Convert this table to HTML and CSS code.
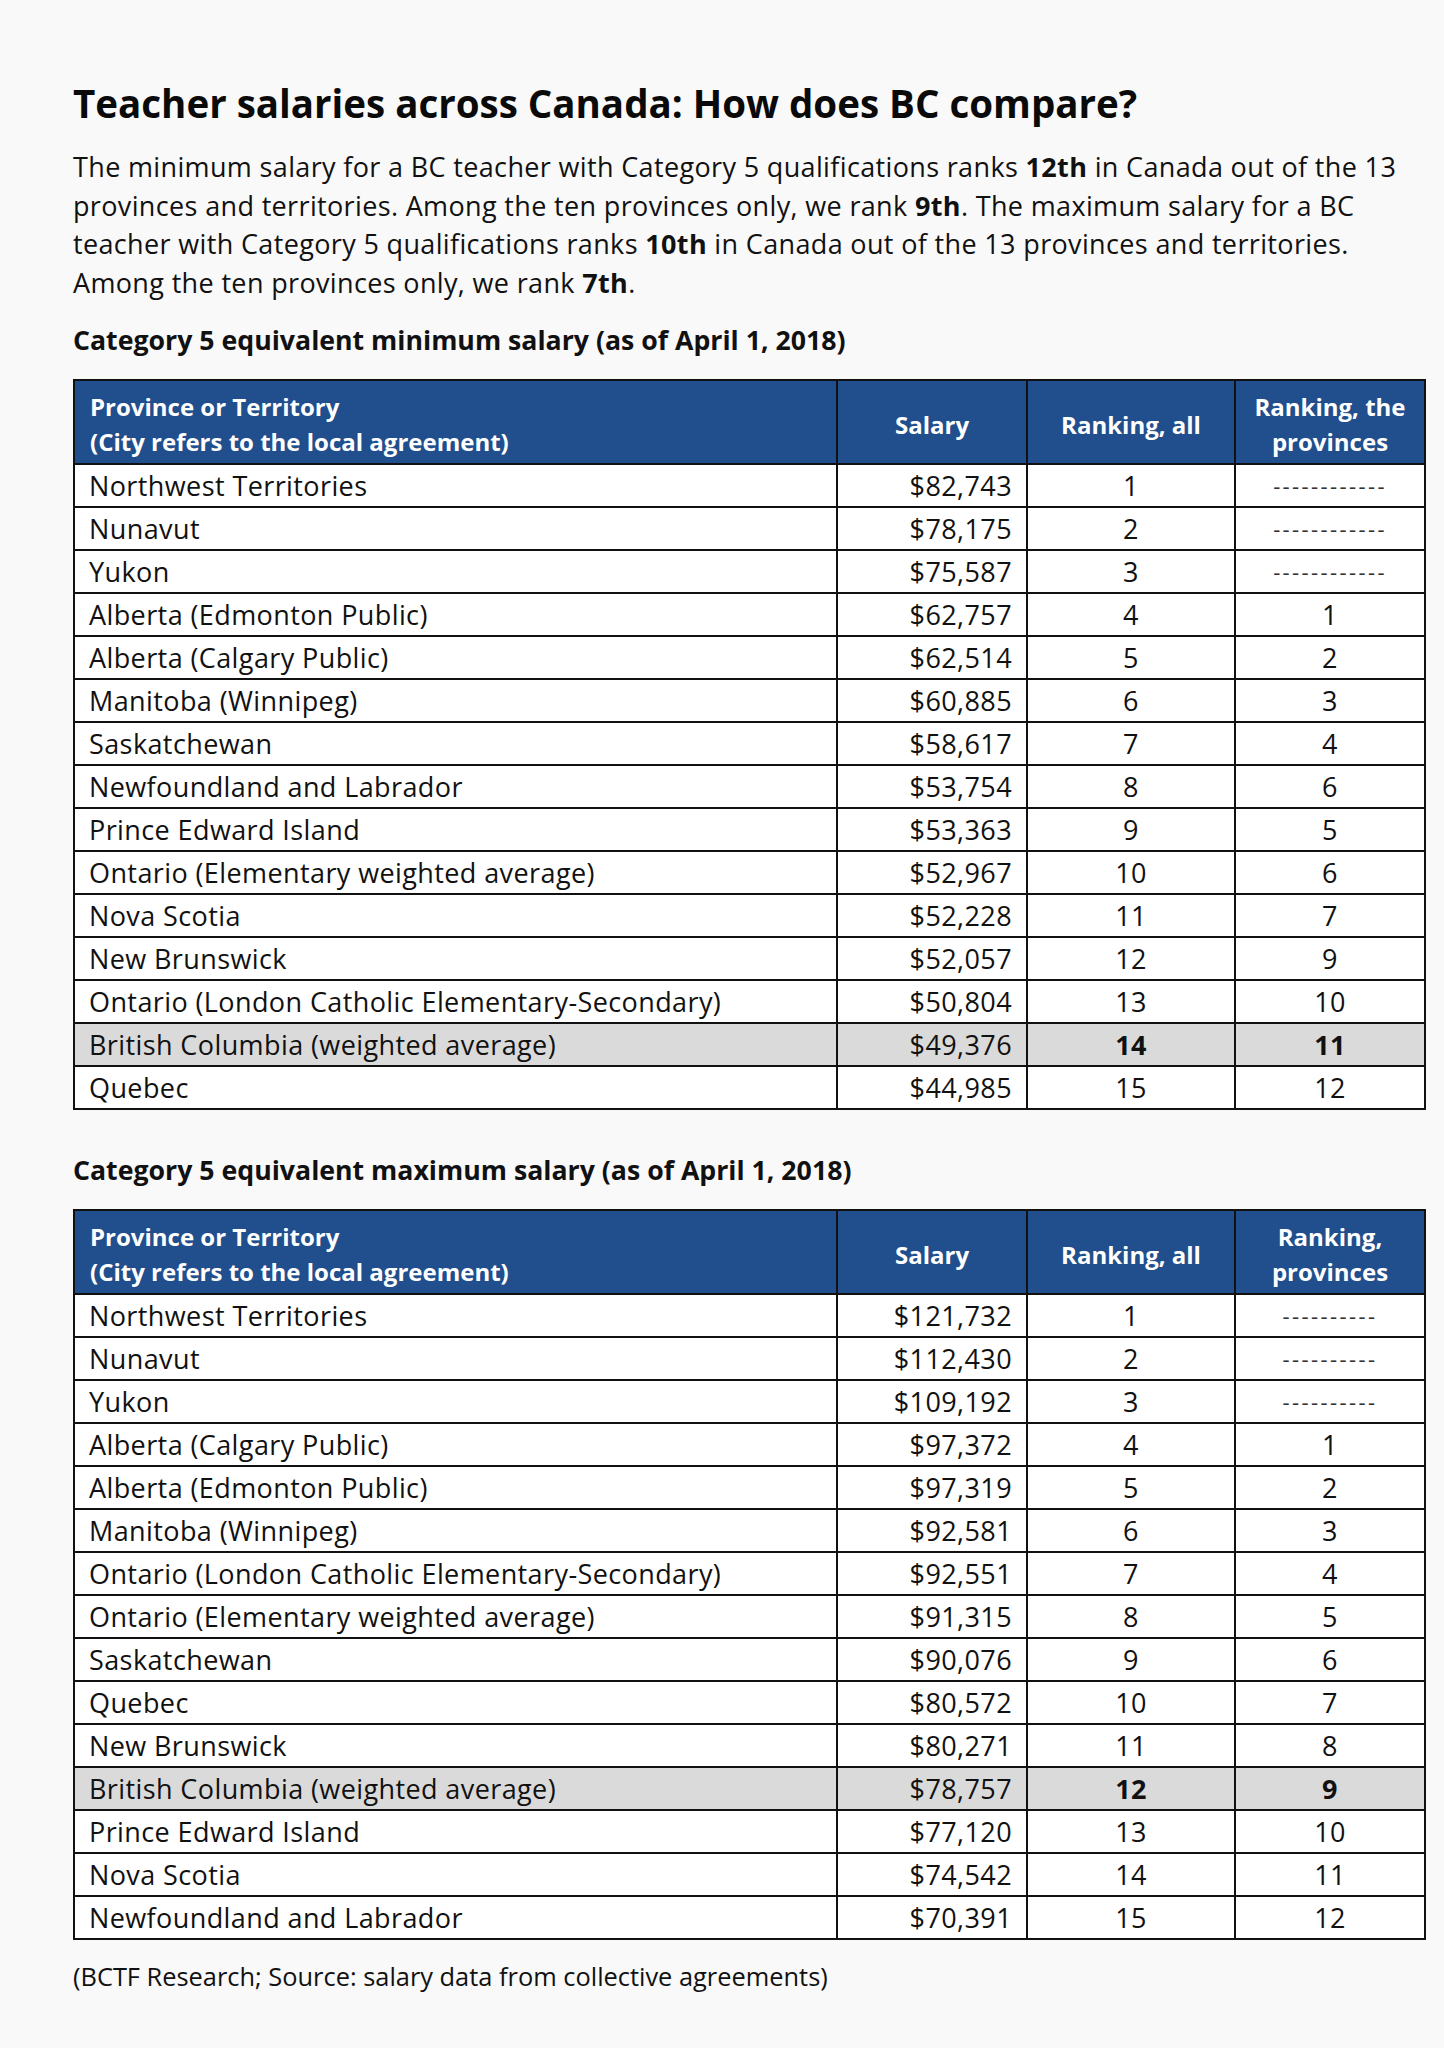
FILE: index.html
```html
<!DOCTYPE html>
<html lang="en">
<head>
<meta charset="utf-8">
<title>Teacher salaries across Canada: How does BC compare?</title>
<link rel="stylesheet" href="styles.css">
</head>
<body>
<main class="page">
  <h1 class="title">Teacher salaries across Canada: How does BC compare?</h1>
  <p class="intro">The minimum salary for a BC teacher with Category 5 qualifications ranks <b>12th</b> in Canada out of the 13<br>provinces and territories. Among the ten provinces only, we rank <b>9th</b>. The maximum salary for a BC<br>teacher with Category 5 qualifications ranks <b>10th</b> in Canada out of the 13 provinces and territories.<br>Among the ten provinces only, we rank <b>7th</b>.</p>

  <h2 class="caption">Category 5 equivalent minimum salary (as of April 1, 2018)</h2>
  <table class="salaries">
    <colgroup><col class="c-name"><col class="c-sal"><col class="c-all"><col class="c-prov"></colgroup>
    <thead>
      <tr><th class="th-name">Province or Territory<br>(City refers to the local agreement)</th><th>Salary</th><th>Ranking, all</th><th>Ranking, the<br>provinces</th></tr>
    </thead>
    <tbody>
      <tr><td class="name">Northwest Territories</td><td class="sal">$82,743</td><td class="rk">1</td><td class="rk dash">------------</td></tr>
      <tr><td class="name">Nunavut</td><td class="sal">$78,175</td><td class="rk">2</td><td class="rk dash">------------</td></tr>
      <tr><td class="name">Yukon</td><td class="sal">$75,587</td><td class="rk">3</td><td class="rk dash">------------</td></tr>
      <tr><td class="name">Alberta (Edmonton Public)</td><td class="sal">$62,757</td><td class="rk">4</td><td class="rk">1</td></tr>
      <tr><td class="name">Alberta (Calgary Public)</td><td class="sal">$62,514</td><td class="rk">5</td><td class="rk">2</td></tr>
      <tr><td class="name">Manitoba (Winnipeg)</td><td class="sal">$60,885</td><td class="rk">6</td><td class="rk">3</td></tr>
      <tr><td class="name">Saskatchewan</td><td class="sal">$58,617</td><td class="rk">7</td><td class="rk">4</td></tr>
      <tr><td class="name">Newfoundland and Labrador</td><td class="sal">$53,754</td><td class="rk">8</td><td class="rk">6</td></tr>
      <tr><td class="name">Prince Edward Island</td><td class="sal">$53,363</td><td class="rk">9</td><td class="rk">5</td></tr>
      <tr><td class="name">Ontario (Elementary weighted average)</td><td class="sal">$52,967</td><td class="rk">10</td><td class="rk">6</td></tr>
      <tr><td class="name">Nova Scotia</td><td class="sal">$52,228</td><td class="rk">11</td><td class="rk">7</td></tr>
      <tr><td class="name">New Brunswick</td><td class="sal">$52,057</td><td class="rk">12</td><td class="rk">9</td></tr>
      <tr><td class="name">Ontario (London Catholic Elementary-Secondary)</td><td class="sal">$50,804</td><td class="rk">13</td><td class="rk">10</td></tr>
      <tr class="bc"><td class="name">British Columbia (weighted average)</td><td class="sal">$49,376</td><td class="rk"><b>14</b></td><td class="rk"><b>11</b></td></tr>
      <tr><td class="name">Quebec</td><td class="sal">$44,985</td><td class="rk">15</td><td class="rk">12</td></tr>
    </tbody>
  </table>

  <h2 class="caption caption-second">Category 5 equivalent maximum salary (as of April 1, 2018)</h2>
  <table class="salaries">
    <colgroup><col class="c-name"><col class="c-sal"><col class="c-all"><col class="c-prov"></colgroup>
    <thead>
      <tr><th class="th-name">Province or Territory<br>(City refers to the local agreement)</th><th>Salary</th><th>Ranking, all</th><th>Ranking,<br>provinces</th></tr>
    </thead>
    <tbody>
      <tr><td class="name">Northwest Territories</td><td class="sal">$121,732</td><td class="rk">1</td><td class="rk dash">----------</td></tr>
      <tr><td class="name">Nunavut</td><td class="sal">$112,430</td><td class="rk">2</td><td class="rk dash">----------</td></tr>
      <tr><td class="name">Yukon</td><td class="sal">$109,192</td><td class="rk">3</td><td class="rk dash">----------</td></tr>
      <tr><td class="name">Alberta (Calgary Public)</td><td class="sal">$97,372</td><td class="rk">4</td><td class="rk">1</td></tr>
      <tr><td class="name">Alberta (Edmonton Public)</td><td class="sal">$97,319</td><td class="rk">5</td><td class="rk">2</td></tr>
      <tr><td class="name">Manitoba (Winnipeg)</td><td class="sal">$92,581</td><td class="rk">6</td><td class="rk">3</td></tr>
      <tr><td class="name">Ontario (London Catholic Elementary-Secondary)</td><td class="sal">$92,551</td><td class="rk">7</td><td class="rk">4</td></tr>
      <tr><td class="name">Ontario (Elementary weighted average)</td><td class="sal">$91,315</td><td class="rk">8</td><td class="rk">5</td></tr>
      <tr><td class="name">Saskatchewan</td><td class="sal">$90,076</td><td class="rk">9</td><td class="rk">6</td></tr>
      <tr><td class="name">Quebec</td><td class="sal">$80,572</td><td class="rk">10</td><td class="rk">7</td></tr>
      <tr><td class="name">New Brunswick</td><td class="sal">$80,271</td><td class="rk">11</td><td class="rk">8</td></tr>
      <tr class="bc"><td class="name">British Columbia (weighted average)</td><td class="sal">$78,757</td><td class="rk"><b>12</b></td><td class="rk"><b>9</b></td></tr>
      <tr><td class="name">Prince Edward Island</td><td class="sal">$77,120</td><td class="rk">13</td><td class="rk">10</td></tr>
      <tr><td class="name">Nova Scotia</td><td class="sal">$74,542</td><td class="rk">14</td><td class="rk">11</td></tr>
      <tr><td class="name">Newfoundland and Labrador</td><td class="sal">$70,391</td><td class="rk">15</td><td class="rk">12</td></tr>
    </tbody>
  </table>

  <p class="source">(BCTF Research; Source: salary data from collective agreements)</p>
</main>
</body>
</html>
```
FILE: styles.css
```css
* { box-sizing: border-box; }

html, body {
  margin: 0;
  padding: 0;
  background: #f9f9f9;
}

body {
  font-family: "Open Sans", Lato, "Liberation Sans", sans-serif;
  color: #111;
}

.page {
  width: 1444px;
  padding: 79px 20px 40px 73px;
}

.title {
  margin: 0;
  font-size: 38.5px;
  line-height: 48px;
  font-weight: 700;
  color: #0a0a0a;
}

.intro {
  margin: 21px 0 0;
  font-size: 27px;
  letter-spacing: 0.35px;
  line-height: 38.5px;
  white-space: nowrap;
}

.intro b { font-weight: 700; }

.caption {
  margin: 21px 0 0;
  font-size: 26.7px;
  line-height: 34px;
  font-weight: 700;
}

.caption-second { margin-top: 43px; }

.salaries {
  margin-top: 22px;
  width: 1351px;
  table-layout: fixed;
  border-collapse: collapse;
  font-size: 27px;
  letter-spacing: 0.4px;
}

.c-name { width: 763px; }
.c-sal { width: 190px; }
.c-all { width: 208px; }
.c-prov { width: 190px; }

.salaries th {
  background: #214e8c;
  color: #fff;
  font-size: 24px;
  letter-spacing: 0;
  font-weight: 700;
  line-height: 35px;
  padding: 8px 6px 4px;
  border: 2px solid #111;
  text-align: center;
  vertical-align: middle;
}

.salaries th.th-name {
  text-align: left;
  padding-left: 15px;
}

.salaries td {
  background: #fff;
  border: 2px solid #111;
  line-height: 41px;
  padding: 0 14px;
  white-space: nowrap;
}

.salaries td.sal { text-align: right; }
.salaries td.rk { text-align: center; }
.salaries td.dash { color: #333; font-size: 22px; letter-spacing: 2.4px; }

.salaries tr.bc td { background: #dadada; }

.source {
  margin: 21px 0 0;
  font-size: 25.4px;
  line-height: 30px;
}
```
